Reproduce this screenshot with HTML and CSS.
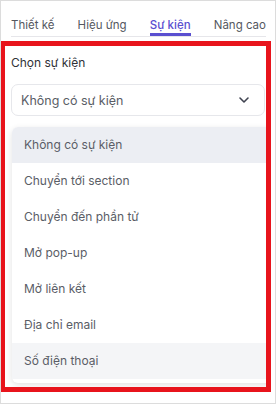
FILE: index.html
```html
<!DOCTYPE html>
<html lang="vi">
<head>
<meta charset="utf-8">
<link rel="stylesheet" href="styles.css">
</head>
<body>
<div class="frame">
  <nav class="tabs">
    <span class="tab">Thiết kế</span>
    <span class="tab">Hiệu ứng</span>
    <span class="tab active">Sự kiện</span>
    <span class="tab">Nâng cao</span>
  </nav>
  <section class="highlight">
    <div class="inner">
      <div class="label">Chọn sự kiện</div>
      <div class="select">
        <span>Không có sự kiện</span>
        <svg class="chev" width="12" height="8" viewBox="0 0 12 8"><path d="M2 2l4 4 4-4" fill="none" stroke="#3f4350" stroke-width="1.6" stroke-linecap="round" stroke-linejoin="round"/></svg>
      </div>
      <ul class="menu">
        <li class="item selected">Không có sự kiện</li>
        <li class="item">Chuyển tới section</li>
        <li class="item">Chuyển đến phần tử</li>
        <li class="item">Mở pop-up</li>
        <li class="item">Mở liên kết</li>
        <li class="item">Địa chỉ email</li>
        <li class="item hover">Số điện thoại</li>
      </ul>
    </div>
  </section>
</div>
</body>
</html>
```
FILE: styles.css
```css
* { box-sizing: border-box; }
html, body { margin: 0; padding: 0; background: #fff; }
body { font-family: Inter, "Noto Sans", sans-serif; }
.frame {
  width: 276px;
  height: 404px;
  border: 1px solid #dcdcdc;
  overflow: hidden;
}
.tabs {
  display: flex;
  justify-content: space-between;
  margin: 0 9px 0 10px;
  padding-top: 16px;
  border-bottom: 1px solid #e6e6ea;
  height: 36px;
}
.tab {
  font-size: 11.5px;
  color: #55585f;
  height: 19px;
  line-height: 16px;
  white-space: nowrap;
}
.tab.active {
  color: #5a4fd0;
  font-weight: 500;
  border-bottom: 3px solid #5a4fd0;
}
.highlight {
  margin-top: 4px;
  width: 270px;
  height: 351px;
  border: solid #e8141c;
  border-width: 5px 5px 5px 4px;
  overflow: hidden;
}
.inner {
  width: 290px;
  padding: 9px 0 0 6px;
}
.label {
  font-size: 12px;
  color: #2f3237;
  line-height: 16px;
}
.select {
  margin-top: 13px;
  width: 254px;
  height: 32px;
  border: 1px solid #e6e7eb;
  border-radius: 7px;
  display: flex;
  align-items: center;
  justify-content: space-between;
  padding: 0 14px 0 9px;
  font-size: 12.5px;
  color: #5a5d66;
}
.chev { display: block; }
.menu {
  list-style: none;
  margin: 11px 0 0 1px;
  padding: 0 0 4px 0;
  width: 280px;
  border-radius: 6px;
  background: #fff;
  box-shadow: 0 2px 6px rgba(0,0,0,0.12);
}
.item {
  height: 36px;
  line-height: 36px;
  padding-left: 12px;
  font-size: 12px;
  color: #5a5d66;
}
.item.selected { background: #eceef3; border-radius: 6px 6px 0 0; }
.item.hover { background: #f4f5f7; }
```
